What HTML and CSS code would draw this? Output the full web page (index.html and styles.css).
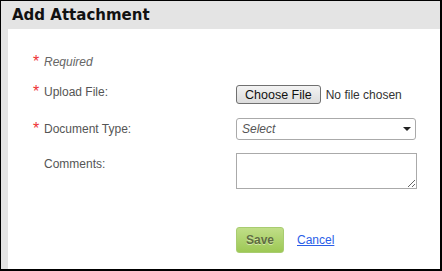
FILE: index.html
```html
<html>
    <head>
        <title>Add Attachment</title>
        <link rel="stylesheet" href="styles.css">
    </head>
    <body>
        <div class="dialog">
            <h1 class="title">Add Attachment</h1>
            <div class="panel">
                <form class="form">
                    <div class="row req">
                        <span class="star">*</span>
                        <span class="label note">Required</span>
                    </div>
                    <div class="row upload">
                        <span class="star">*</span>
                        <span class="label">Upload File:</span>
                        <input class="file" type="file">
                    </div>
                    <div class="row doctype">
                        <span class="star">*</span>
                        <span class="label">Document Type:</span>
                        <div class="select-wrap">
                            <select class="select">
                                <option>Select</option>
                            </select>
                        </div>
                    </div>
                    <div class="row comments">
                        <span class="star"></span>
                        <span class="label">Comments:</span>
                        <textarea class="text"></textarea>
                    </div>
                    <div class="row actions">
                        <span class="star"></span>
                        <span class="label"></span>
                        <button class="btn save" type="button">Save</button>
                        <a class="cancel" href="#">Cancel</a>
                    </div>
                </form>
            </div>
        </div>
    </body>
</html>
```

FILE: styles.css
```css
body {
    margin: 0;
    font-family: "Liberation Sans", Arial, sans-serif;
}

.dialog {
    box-sizing: border-box;
    width: 442px;
    height: 271px;
    border: 1px solid #000;
    border-right-width: 2px;
    border-bottom-width: 2px;
    background-color: #e4e4e4;
    display: flex;
    flex-direction: column;
}

.title {
    margin: 0;
    height: 28px;
    padding-left: 11px;
    font-family: "DejaVu Sans", Verdana, sans-serif;
    font-size: 15px;
    font-weight: bold;
    line-height: 28px;
    color: #111;
}

.panel {
    flex: 1;
    margin-left: 7px;
    background-color: #fff;
}

.form {
    margin: 0;
    padding: 25px 0 0 25px;
}

.row {
    display: flex;
    align-items: flex-start;
    font-size: 12px;
    color: #555;
}

.star {
    width: 11px;
    color: #ee3333;
    font-size: 16px;
    line-height: 16px;
}

.label {
    width: 192px;
    line-height: 16px;
}

.note {
    font-style: italic;
    color: #666;
}

.upload {
    margin-top: 14px;
}

.file {
    font-family: "Liberation Sans", Arial, sans-serif;
    font-size: 12px;
    color: #333;
    margin: 0;
    margin-top: 1px;
    width: 190px;
}

.file::file-selector-button {
    font-family: "Liberation Sans", Arial, sans-serif;
    font-size: 12.5px;
    color: #111;
    height: 19px;
    padding: 0 8px;
    margin-right: 5px;
    border: 1px solid #707070;
    border-radius: 3px;
    background: linear-gradient(#f3f3f3, #dcdcdc);
}

.doctype {
    margin-top: 17px;
}

.select-wrap {
    position: relative;
    margin-top: -3px;
}

.select {
    appearance: none;
    width: 180px;
    height: 22px;
    padding: 0 5px;
    border: 1px solid #aaa;
    border-radius: 3px;
    background-color: #fff;
    font-family: "Liberation Sans", Arial, sans-serif;
    font-size: 12px;
    font-style: italic;
    color: #555;
}

.select-wrap::after {
    content: "";
    position: absolute;
    right: 5px;
    top: 9px;
    border-left: 4px solid transparent;
    border-right: 4px solid transparent;
    border-top: 4px solid #222;
}

.comments {
    margin-top: 16px;
}

.text {
    width: 181px;
    height: 36px;
    margin: 0;
    margin-top: -3px;
    padding: 2px;
    box-sizing: border-box;
    border: 1px solid #aaa;
}

.actions {
    margin-top: 38px;
    align-items: center;
}

.btn {
    outline: none;
    cursor: pointer;
}

.save {
    width: 48px;
    height: 26px;
    padding: 0;
    border: 1px solid #a8cc70;
    border-radius: 3px;
    background: linear-gradient(#c0de88, #9dc855);
    font-family: "Liberation Sans", Arial, sans-serif;
    font-size: 12px;
    font-weight: bold;
    color: #5f6d42;
    text-shadow: 0 1px 0 #d6eaa8;
}

.cancel {
    margin-left: 13px;
    font-size: 12px;
    color: #2a5ee8;
    text-decoration: underline;
}
```
